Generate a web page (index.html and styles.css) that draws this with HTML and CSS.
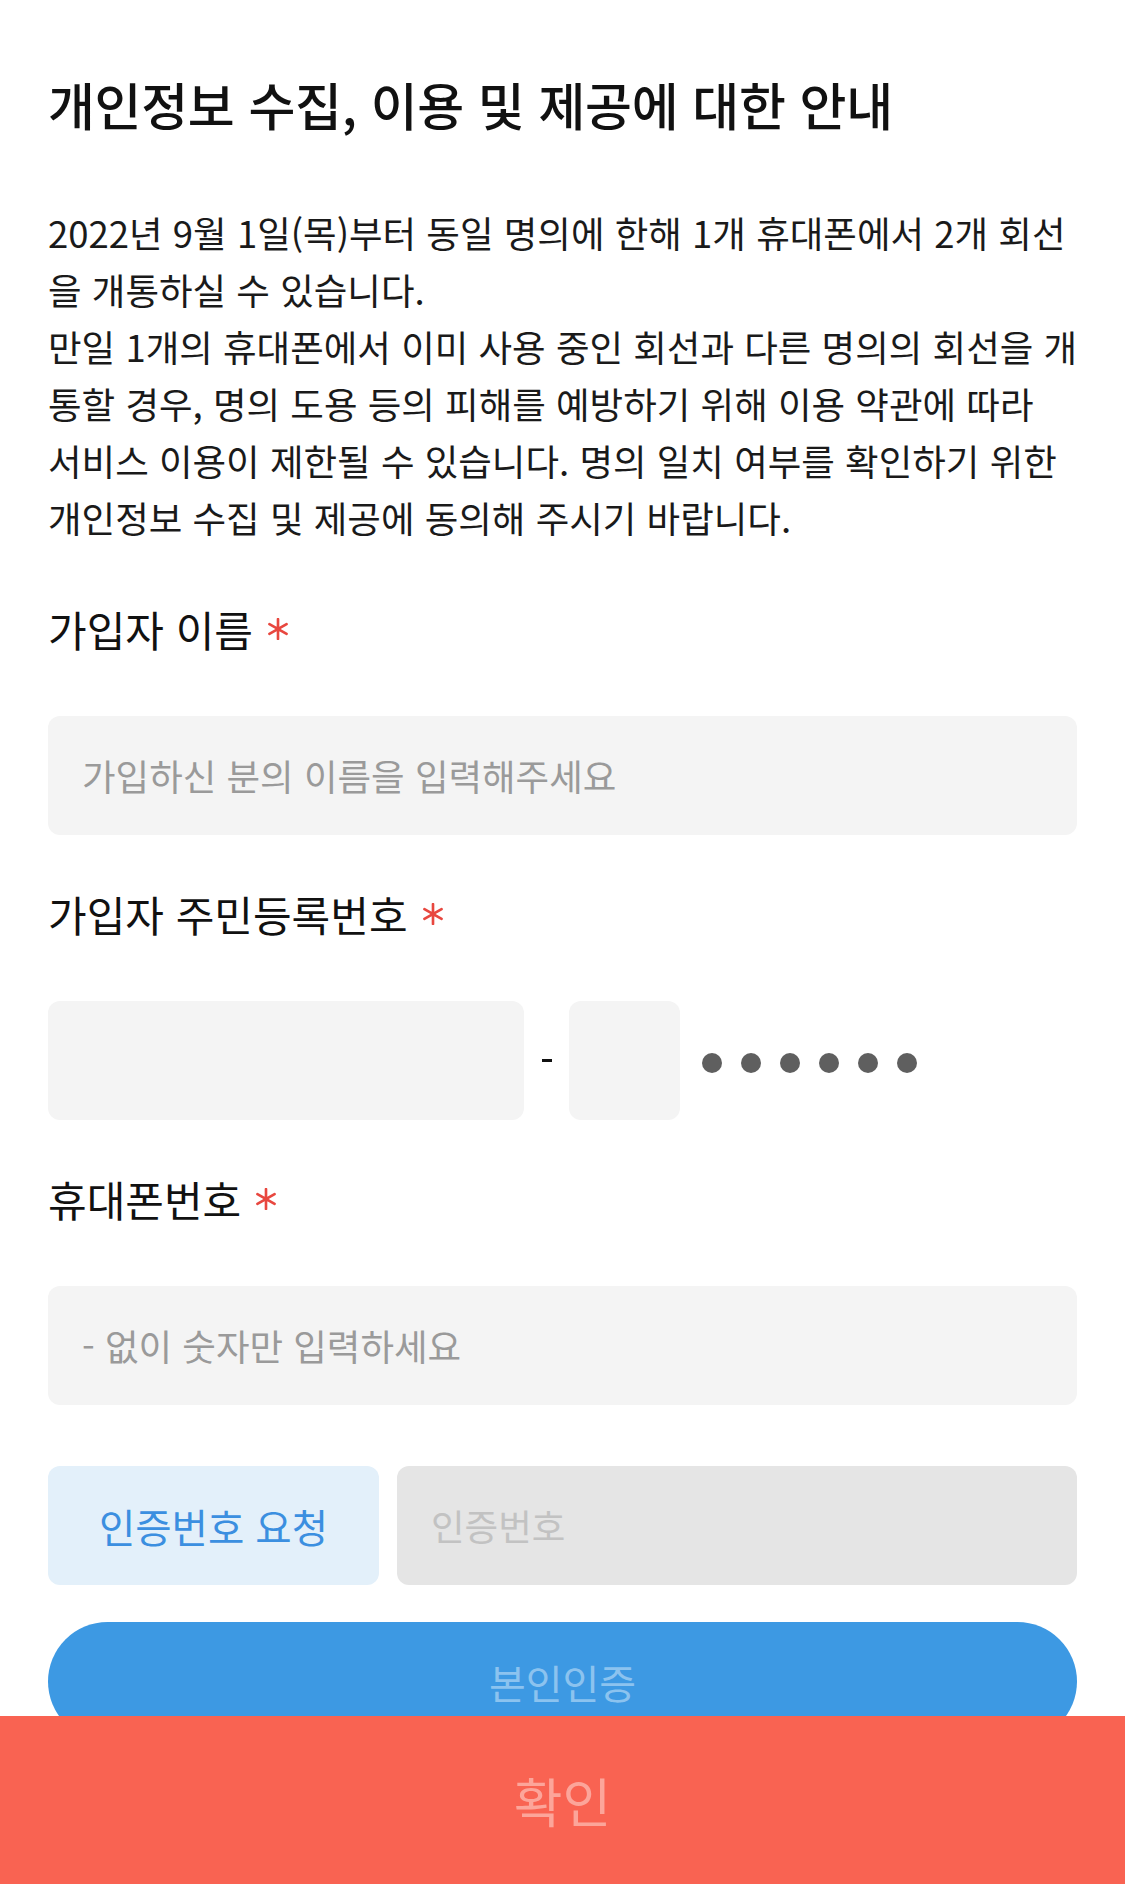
FILE: index.html
```html
<!DOCTYPE html>
<html lang="ko">
<head>
    <meta charset="UTF-8">
    <meta name="viewport" content="width=device-width, initial-scale=1.0">
    <title>개인정보 수집, 이용 및 제공에 대한 안내</title>
    <link rel="stylesheet" href="styles.css">
</head>
<body>
    <div class="page">
        <h1 class="title">개인정보 수집, 이용 및 제공에 대한 안내</h1>
        <p class="notice">2022년 9월 1일(목)부터 동일 명의에 한해 1개 휴대폰에서 2개 회선을 개통하실 수 있습니다.<br>만일 1개의 휴대폰에서 이미 사용 중인 회선과 다른 명의의 회선을 개통할 경우, 명의 도용 등의 피해를 예방하기 위해 이용 약관에 따라<br>서비스 이용이 제한될 수 있습니다. 명의 일치 여부를 확인하기 위한 개인정보 수집 및 제공에 동의해 주시기 바랍니다.</p>

        <div class="field">
            <label class="field-label">가입자 이름 <span class="req"><svg viewBox="0 0 20 20"><path d="M10 1v18M2.2 5.5l15.6 9M2.2 14.5l15.6-9"/></svg></span></label>
            <input class="text-input" type="text" placeholder="가입하신 분의 이름을 입력해주세요">
        </div>

        <div class="field">
            <label class="field-label">가입자 주민등록번호 <span class="req"><svg viewBox="0 0 20 20"><path d="M10 1v18M2.2 5.5l15.6 9M2.2 14.5l15.6-9"/></svg></span></label>
            <div class="ssn-row">
                <input class="text-input ssn-front" type="text">
                <span class="ssn-dash"></span>
                <input class="text-input ssn-back" type="text">
                <div class="ssn-mask">
                    <span></span><span></span><span></span><span></span><span></span><span></span>
                </div>
            </div>
        </div>

        <div class="field">
            <label class="field-label">휴대폰번호 <span class="req"><svg viewBox="0 0 20 20"><path d="M10 1v18M2.2 5.5l15.6 9M2.2 14.5l15.6-9"/></svg></span></label>
            <input class="text-input" type="tel" placeholder="- 없이 숫자만 입력하세요">
        </div>

        <div class="code-row">
            <button class="code-btn">인증번호 요청</button>
            <input class="text-input code-input" type="text" placeholder="인증번호" disabled>
        </div>

        <button class="verify-btn">본인인증</button>
    </div>

    <button class="confirm-btn">확인</button>
</body>
</html>
```

FILE: styles.css
```css
* {
    margin: 0;
    padding: 0;
    box-sizing: border-box;
}

body {
    font-family: "Noto Sans CJK KR", "Noto Sans", sans-serif;
    background: #ffffff;
    color: #111111;
    min-height: 100vh;
}

.page {
    padding: 71px 48px 200px;
}

.title {
    font-size: 51px;
    font-weight: 500;
    line-height: 67px;
    letter-spacing: -0.3px;
}

.notice {
    margin: 66px -3px 55px 0;
    font-size: 36.5px;
    line-height: 57px;
    color: #1a1a1a;
}

.field {
    margin-top: 51px;
}

.field-label {
    display: flex;
    align-items: center;
    font-size: 42px;
    line-height: 56px;
    margin-bottom: 59px;
}

.req {
    display: inline-flex;
    margin-left: 14px;
    width: 22px;
    height: 22px;
}

.req svg {
    width: 100%;
    height: 100%;
    fill: none;
    stroke: #e8473f;
    stroke-width: 2.4;
    stroke-linecap: round;
}

.text-input {
    display: block;
    width: 100%;
    height: 119px;
    border: none;
    border-radius: 12px;
    background: #f4f4f4;
    padding: 0 34px;
    font-family: inherit;
    font-size: 36.5px;
    color: #111111;
    outline: none;
}

.text-input::placeholder {
    color: #9a9a9a;
}

.ssn-row {
    display: flex;
    align-items: center;
}

.ssn-front {
    width: 476px;
}

.ssn-dash {
    width: 10px;
    height: 3px;
    background: #111111;
    margin: 0 17px 0 18px;
}

.ssn-back {
    width: 111px;
}

.ssn-mask {
    display: flex;
    gap: 19px;
    margin-left: 22px;
    padding-top: 4px;
}

.ssn-mask span {
    width: 20px;
    height: 20px;
    border-radius: 50%;
    background: #5f5f5f;
}

.code-row {
    display: flex;
    gap: 18px;
    margin-top: 61px;
}

.code-btn {
    flex: 0 0 331px;
    height: 119px;
    border: none;
    border-radius: 12px;
    background: #e3f0fa;
    color: #3b8fe0;
    font-family: inherit;
    font-size: 39.5px;
}

.code-input {
    flex: 1;
    background: #e5e5e5;
}

.code-input::placeholder {
    color: #c2c2c2;
}

.verify-btn {
    display: block;
    width: 100%;
    height: 119px;
    margin-top: 37px;
    border: none;
    border-radius: 60px;
    background: #3d99e3;
    color: #8cc3ef;
    font-family: inherit;
    font-size: 40px;
}

.confirm-btn {
    position: fixed;
    left: 0;
    right: 0;
    bottom: 0;
    height: 168px;
    border: none;
    background: #f96352;
    color: #fca59a;
    font-family: inherit;
    font-size: 53px;
}
```
